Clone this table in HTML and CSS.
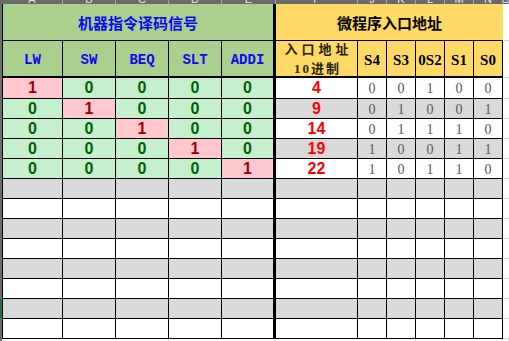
FILE: index.html
```html
<!DOCTYPE html>
<html lang="zh-CN">
<head>
<meta charset="utf-8">
<title>微程序入口地址</title>
<link rel="stylesheet" href="styles.css">
</head>
<body>
<div class="sheet">
  <div class="corner"></div>
  <div class="ch"><span>A</span></div>
  <div class="ch"><span>B</span></div>
  <div class="ch"><span>C</span></div>
  <div class="ch"><span>D</span></div>
  <div class="ch"><span>E</span></div>
  <div class="ch"><span>F</span></div>
  <div class="ch"><span>J</span></div>
  <div class="ch"><span>K</span></div>
  <div class="ch"><span>L</span></div>
  <div class="ch"><span>M</span></div>
  <div class="ch"><span>N</span></div>
  <div class="ch"><span>O</span></div>

  <div class="rh"></div>
  <div class="c first thick title t-green">机器指令译码信号</div>
  <div class="c title t-yellow">微程序入口地址</div>
  <div class="f"></div>

  <div class="rh"></div>
  <div class="c first hd hd-g">LW</div>
  <div class="c hd hd-g">SW</div>
  <div class="c hd hd-g">BEQ</div>
  <div class="c hd hd-g">SLT</div>
  <div class="c thick hd hd-g">ADDI</div>
  <div class="c hd hd-y addr"><span class="l1">入口地址</span><span class="l2">10进制</span></div>
  <div class="c hd hd-y sx">S4</div>
  <div class="c hd hd-y sx">S3</div>
  <div class="c hd hd-y sx">0S2</div>
  <div class="c hd hd-y sx">S1</div>
  <div class="c hd hd-y sx">S0</div>
  <div class="f"></div>

  <div class="rh"></div>
  <div class="c first sig b">1</div><div class="c sig g">0</div><div class="c sig g">0</div><div class="c sig g">0</div><div class="c thick sig g">0</div>
  <div class="c num w">4</div><div class="c bit w">0</div><div class="c bit w">0</div><div class="c bit w">1</div><div class="c bit w">0</div><div class="c bit w">0</div>
  <div class="f"></div>

  <div class="rh"></div>
  <div class="c first sig g">0</div><div class="c sig b">1</div><div class="c sig g">0</div><div class="c sig g">0</div><div class="c thick sig g">0</div>
  <div class="c num k">9</div><div class="c bit k">0</div><div class="c bit k">1</div><div class="c bit k">0</div><div class="c bit k">0</div><div class="c bit k">1</div>
  <div class="f"></div>

  <div class="rh"></div>
  <div class="c first sig g">0</div><div class="c sig g">0</div><div class="c sig b">1</div><div class="c sig g">0</div><div class="c thick sig g">0</div>
  <div class="c num w">14</div><div class="c bit w">0</div><div class="c bit w">1</div><div class="c bit w">1</div><div class="c bit w">1</div><div class="c bit w">0</div>
  <div class="f"></div>

  <div class="rh"></div>
  <div class="c first sig g">0</div><div class="c sig g">0</div><div class="c sig g">0</div><div class="c sig b">1</div><div class="c thick sig g">0</div>
  <div class="c num k">19</div><div class="c bit k">1</div><div class="c bit k">0</div><div class="c bit k">0</div><div class="c bit k">1</div><div class="c bit k">1</div>
  <div class="f"></div>

  <div class="rh"></div>
  <div class="c first sig g">0</div><div class="c sig g">0</div><div class="c sig g">0</div><div class="c sig g">0</div><div class="c thick sig b">1</div>
  <div class="c num w">22</div><div class="c bit w">1</div><div class="c bit w">0</div><div class="c bit w">1</div><div class="c bit w">1</div><div class="c bit w">0</div>
  <div class="f"></div>

  <div class="rh"></div>
  <div class="c first k"></div><div class="c k"></div><div class="c k"></div><div class="c k"></div><div class="c thick k"></div>
  <div class="c k"></div><div class="c k"></div><div class="c k"></div><div class="c k"></div><div class="c k"></div><div class="c k"></div>
  <div class="f"></div>

  <div class="rh"></div>
  <div class="c first w"></div><div class="c w"></div><div class="c w"></div><div class="c w"></div><div class="c thick w"></div>
  <div class="c w"></div><div class="c w"></div><div class="c w"></div><div class="c w"></div><div class="c w"></div><div class="c w"></div>
  <div class="f"></div>

  <div class="rh"></div>
  <div class="c first k"></div><div class="c k"></div><div class="c k"></div><div class="c k"></div><div class="c thick k"></div>
  <div class="c k"></div><div class="c k"></div><div class="c k"></div><div class="c k"></div><div class="c k"></div><div class="c k"></div>
  <div class="f"></div>

  <div class="rh"></div>
  <div class="c first w"></div><div class="c w"></div><div class="c w"></div><div class="c w"></div><div class="c thick w"></div>
  <div class="c w"></div><div class="c w"></div><div class="c w"></div><div class="c w"></div><div class="c w"></div><div class="c w"></div>
  <div class="f"></div>

  <div class="rh"></div>
  <div class="c first k"></div><div class="c k"></div><div class="c k"></div><div class="c k"></div><div class="c thick k"></div>
  <div class="c k"></div><div class="c k"></div><div class="c k"></div><div class="c k"></div><div class="c k"></div><div class="c k"></div>
  <div class="f"></div>

  <div class="rh"></div>
  <div class="c first w"></div><div class="c w"></div><div class="c w"></div><div class="c w"></div><div class="c thick w"></div>
  <div class="c w"></div><div class="c w"></div><div class="c w"></div><div class="c w"></div><div class="c w"></div><div class="c w"></div>
  <div class="f"></div>

  <div class="rh sel"></div>
  <div class="c first k"></div><div class="c k"></div><div class="c k"></div><div class="c k"></div><div class="c thick k"></div>
  <div class="c k"></div><div class="c k"></div><div class="c k"></div><div class="c k"></div><div class="c k"></div><div class="c k"></div>
  <div class="f"></div>

  <div class="rh"></div>
  <div class="c first w"></div><div class="c w"></div><div class="c w"></div><div class="c w"></div><div class="c thick w"></div>
  <div class="c w"></div><div class="c w"></div><div class="c w"></div><div class="c w"></div><div class="c w"></div><div class="c w"></div>
  <div class="f"></div>

  <div class="rh"></div>
  <div class="e"></div><div class="e"></div><div class="e"></div><div class="e"></div><div class="e"></div>
  <div class="e"></div><div class="e"></div><div class="e"></div><div class="e"></div><div class="e"></div><div class="e"></div>
  <div class="e"></div>
</div>
</body>
</html>
```

FILE: styles.css
```css
html, body {
  margin: 0;
  padding: 0;
  background: #ffffff;
}

.sheet {
  display: grid;
  grid-template-columns: 2px 61px 53px 53px 53px 54px 82px 29px 29px 29px 29px 29px 6px;
  grid-template-rows: 4px 37px 37px 21px repeat(12, 20px) 2px;
  width: 509px;
  height: 341px;
  overflow: hidden;
}

.corner {
  background: #6a6a6a;
}

.ch {
  box-sizing: border-box;
  background: #6a6a6a;
  border-right: 1px solid #a2a2a2;
  overflow: hidden;
  display: flex;
  justify-content: center;
  align-items: flex-end;
  font: 11px/1 "Liberation Sans", Arial, sans-serif;
  color: #e6e6e6;
}

.ch span {
  margin-bottom: -1px;
}

.rh {
  background: #6e6e6e;
}

.rh.sel {
  background: #217346;
}

.c {
  box-sizing: border-box;
  border-right: 1px solid #000;
  border-bottom: 1px solid #000;
  display: flex;
  align-items: center;
  justify-content: center;
  overflow: hidden;
  white-space: nowrap;
}

.first {
  border-left: 1px solid #000;
}

.thick {
  border-right-width: 3px;
}

.title {
  font: bold 15px/1 "Noto Sans CJK SC", sans-serif;
}

.t-green {
  grid-column: 2 / 7;
  background: #a9d08e;
  color: #0a0af0;
}

.t-yellow {
  grid-column: 7 / 13;
  background: #ffd966;
  color: #000;
  border-right: none;
}

.hd {
  border-bottom-width: 2px;
  padding-top: 3px;
}

.hd-g {
  background: #a9d08e;
  color: #0a0af0;
  font: bold 14px/1 "Liberation Mono", monospace;
}

.hd-y {
  background: #ffd966;
  color: #000;
}

.sx {
  font: bold 15px/1 "Liberation Serif", serif;
}

.addr {
  flex-direction: column;
  padding-top: 1px;
  font: bold 13px/19px "Liberation Serif", "Noto Sans CJK SC", serif;
  color: #2a2410;
}

.addr .l1 {
  letter-spacing: 4px;
  margin-right: -4px;
}

.addr .l2 {
  letter-spacing: 2px;
  margin-right: -2px;
}

.sig {
  font: bold 16px/1 "Liberation Sans", Arial, sans-serif;
}

.g {
  background: #c6efce;
  color: #006100;
}

.b {
  background: #ffc7ce;
  color: #9c0006;
}

.w {
  background: #ffffff;
}

.k {
  background: #d9d9d9;
}

.num {
  font: bold 16px/1 "Liberation Sans", Arial, sans-serif;
  color: #ff0000;
}

.bit {
  font: 14px/1 "Liberation Serif", serif;
  color: #555a60;
  padding-top: 2px;
}

.f {
  box-sizing: border-box;
  border-bottom: 1px solid #d4d4d4;
}

.e {
  box-sizing: border-box;
  border-right: 1px solid #d4d4d4;
}
```
